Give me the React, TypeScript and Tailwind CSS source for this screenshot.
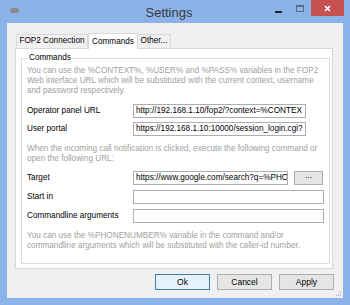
import React from 'react';

const font = { fontFamily: '"Liberation Sans", Arial, sans-serif' };

function Field({ label, value, width }: { label: string; value?: string; width: string }) {
  return (
    <div className="flex items-center h-[14px]">
      <div className="w-[106px] text-black leading-none">{label}</div>
      <div
        className={`${width} h-[14px] border border-[#abadb3] bg-white px-[2px] leading-[12px] overflow-hidden whitespace-nowrap text-black`}
      >
        {value}
      </div>
    </div>
  );
}

function Button({ label, primary }: { label: string; primary?: boolean }) {
  return (
    <div
      className={`w-[55px] h-[16px] flex items-center justify-center border ${
        primary ? 'border-[#3c7fb1] bg-[#e5f1fb]' : 'border-[#acacac] bg-[#e5e5e5]'
      } text-black text-[8.5px]`}
    >
      {label}
    </div>
  );
}

export default function App() {
  return (
    <div className="w-[350px] h-[305px] bg-[#8cb3e9] flex flex-col text-[8.2px]" style={font}>
      {/* title bar */}
      <div className="h-[23px] flex items-start">
        <div className="ml-[10px] mt-[8px] w-[9px] h-[5px] rounded-full bg-[#8a8a8a]" />
        <div className="flex-1 text-center text-[13px] text-[#3a3a3a] mt-[3px] ml-[44px]">Settings</div>
        <div className="w-[7px] h-[2px] bg-[#222] mt-[11px] mr-[14px]" />
        <div className="w-[8px] h-[7px] border border-[#5a6b80] border-t-2 mt-[5px] mr-[7px]" />
        <div className="w-[33px] h-[16px] bg-[#c75050] mr-[6px] flex items-center justify-center">
          <svg width="7" height="7" viewBox="0 0 7 7">
            <path d="M1 1L6 6M6 1L1 6" stroke="#fff" strokeWidth="1.6" />
          </svg>
        </div>
      </div>

      {/* client area */}
      <div className="mx-[7px] h-[275px] bg-[#f0f0f0] flex flex-col relative">
        {/* tabs */}
        <div className="flex items-end pl-[9px] h-[25px]">
          <div className="w-[72px] h-[14px] border border-b-0 border-[#d9d9d9] bg-[#f0f0f0] flex items-center justify-center text-black">
            FOP2 Connection
          </div>
          <div className="w-[50px] h-[16px] border border-b-0 border-[#d9d9d9] bg-white flex items-start pt-[2px] justify-center text-black -mb-[1px] relative z-10">
            Commands
          </div>
          <div className="w-[33px] h-[14px] border border-b-0 border-l-0 border-[#d9d9d9] bg-[#f0f0f0] flex items-center justify-center text-black">
            Other...
          </div>
        </div>

        {/* tab panel */}
        <div className="ml-[8px] w-[318px] h-[221px] bg-white border border-[#d9d9d9] pl-[5px] pr-[3px] pt-[4px]">
          <fieldset className="border border-[#dcdcdc] h-[211px] px-[5px]">
            <legend className="px-[1px] ml-[1px] text-black leading-[10px]">Commands</legend>
            <div className="text-[#a0a0a0] leading-[10px] mt-[3px] whitespace-nowrap">
              You can use the %CONTEXT%, %USER% and %PASS% variables in the FOP2
              <br />
              Web interface URL which will be substituted with the current context, username
              <br />
              and password respectively.
            </div>
            <div className="flex flex-col gap-[4px] mt-[8px]">
              <Field label="Operator panel URL" value="http://192.168.1.10/fop2/?context=%CONTEX" width="w-[173px]" />
              <Field label="User portal" value="https://192.168.1.10:10000/session_login.cgi?" width="w-[173px]" />
            </div>
            <div className="text-[#a0a0a0] leading-[10px] mt-[8px] whitespace-nowrap">
              When the incoming call notification is clicked, execute the following command or
              <br />
              open the following URL:
            </div>
            <div className="flex flex-col gap-[5px] mt-[7px]">
              <div className="flex items-center">
                <Field label="Target" value="https://www.google.com/search?q=%PHO" width="w-[155px]" />
                <div className="ml-[6px] w-[29px] h-[14px] border border-[#acacac] bg-[#e5e5e5] flex items-center justify-center text-black leading-none pb-[3px]">
                  ...
                </div>
              </div>
              <Field label="Start in" width="w-[191px]" />
              <Field label="Commandline arguments" width="w-[191px]" />
            </div>
            <div className="text-[#a0a0a0] leading-[9.5px] mt-[8px] whitespace-nowrap">
              You can use the %PHONENUMBER% variable in the command and/or
              <br />
              commandline arguments which will be substituted with the caller-id number.
            </div>
          </fieldset>
        </div>

        {/* buttons */}
        <div className="flex justify-end gap-[7px] mt-[5px] mr-[9px]">
          <Button label="Ok" primary />
          <Button label="Cancel" />
          <Button label="Apply" />
        </div>

        {/* size grip */}
        <svg className="absolute right-[1px] bottom-[1px]" width="6" height="6" viewBox="0 0 6 6">
          <rect x="4" y="0" width="1" height="1" fill="#b0b0b0" />
          <rect x="2" y="2" width="1" height="1" fill="#b0b0b0" />
          <rect x="4" y="2" width="1" height="1" fill="#b0b0b0" />
          <rect x="0" y="4" width="1" height="1" fill="#b0b0b0" />
          <rect x="2" y="4" width="1" height="1" fill="#b0b0b0" />
          <rect x="4" y="4" width="1" height="1" fill="#b0b0b0" />
        </svg>
      </div>
    </div>
  );
}
